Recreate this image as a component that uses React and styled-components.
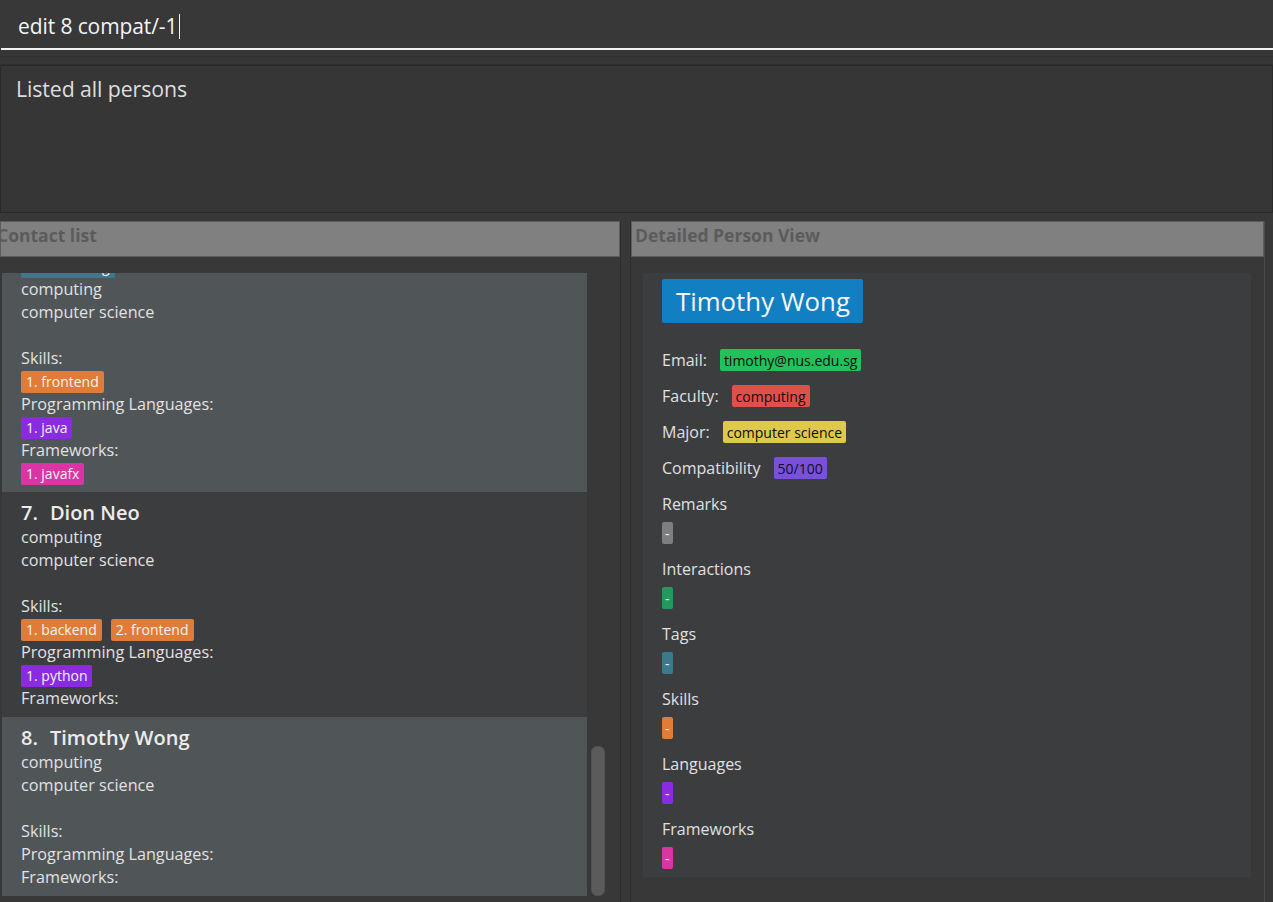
import React from "react";
import styled, { createGlobalStyle } from "styled-components";

const GlobalStyle = createGlobalStyle`
  html, body {
    margin: 0;
    padding: 0;
    background: #383838;
    font-family: "Open Sans", "Noto Sans", sans-serif;
    overflow: hidden;
  }
`;

const Root = styled.div`
  width: 1273px;
  height: 902px;
  display: flex;
  flex-direction: column;
  background: #383838;
  overflow: hidden;
`;

const CommandBar = styled.div`
  height: 50px;
  flex-shrink: 0;
  box-sizing: border-box;
  display: flex;
  align-items: center;
  padding: 4px 0 0 17px;
  border-bottom: 2px solid #f2f2f2;
  margin-left: 1px;
`;

const CommandText = styled.span`
  font-size: 21px;
  color: #f4f4f4;
  letter-spacing: -0.1px;
`;

const Caret = styled.span`
  display: inline-block;
  width: 1px;
  height: 25px;
  background: #f4f4f4;
  margin-left: 2px;
`;

const Band = styled.div`
  height: 15px;
  flex-shrink: 0;
  box-sizing: border-box;
  border-bottom: 1px solid #2e2e2e;
  background: #363636;
  &::after {
    content: "";
    display: block;
    height: 1px;
    margin-top: 6px;
    background: #303030;
  }
`;

const ResultBox = styled.div`
  height: 148px;
  flex-shrink: 0;
  box-sizing: border-box;
  border: 1px solid #2a2a2a;
  background: #363636;
  padding: 8px 15px;
  font-size: 21.3px;
  color: #dedede;
  letter-spacing: -0.1px;
`;

const Panes = styled.div`
  flex: 1;
  display: flex;
  margin-top: 8px;
  min-height: 0;
`;

const LeftPane = styled.div`
  width: 620px;
  display: flex;
  flex-direction: column;
  border-right: 1px solid #2c2c2c;
  min-height: 0;
`;

const RightPane = styled.div`
  width: 633px;
  margin-left: 9px;
  display: flex;
  flex-direction: column;
  border-right: 1px solid #4a4a4a;
  border-left: 1px solid #2f2f2f;
`;

const PaneHeader = styled.div`
  height: 36px;
  flex-shrink: 0;
  box-sizing: border-box;
  background: #808080;
  border: 1px solid #5c5c5c;
  padding: 0 0 0 ${p => p.$indent}px;
  line-height: 26px;
  font-size: 17.5px;
  font-weight: 700;
  color: #5b5b5b;
  white-space: nowrap;
  overflow: hidden;
`;

const ClippedTitle = styled.span`
  display: inline-block;
  margin-left: -4px;
`;

const ListBody = styled.div`
  flex: 1;
  display: flex;
  margin-top: 16px;
  padding-bottom: 6px;
  min-height: 0;
`;

const ListView = styled.div`
  width: 585px;
  margin-left: 2px;
  display: flex;
  flex-direction: column;
  justify-content: flex-end;
  overflow: hidden;
`;

const ScrollTrack = styled.div`
  flex: 1;
  display: flex;
  flex-direction: column;
  justify-content: flex-end;
  padding: 0 15px 0 4px;
`;

const ScrollThumb = styled.div`
  height: 148px;
  border-radius: 6px;
  background: #5b5b5b;
  border: 1px solid #525252;
`;

const Card = styled.div`
  flex-shrink: 0;
  background: ${p => (p.$alt ? "#505558" : "#3c3d3f")};
  padding: 8px 19px 7px;
  color: #e2e2e2;
`;

const Name = styled.div`
  height: 26px;
  line-height: 26px;
  font-size: 20px;
  font-weight: 600;
  color: #ececec;
`;

const Gap = styled.span`
  display: inline-block;
  width: 12px;
`;

const Line = styled.div`
  height: 23px;
  line-height: 23px;
  font-size: 16.2px;
`;

const BadgeRow = styled.div`
  height: 23px;
  display: flex;
  align-items: center;
  gap: 9px;
`;

const Badge = styled.span`
  display: inline-flex;
  align-items: center;
  height: 22px;
  padding: 0 ${p => p.$pad ?? 5}px;
  border-radius: 2px;
  background: ${p => p.$bg};
  color: ${p => p.$fg || "#f2f2f2"};
  font-size: 14px;
  white-space: nowrap;
`;

const DetailBody = styled.div`
  flex: 1;
  padding: 16px 13px 0 12px;
`;

const DetailCard = styled.div`
  background: #3c3d3f;
  padding: 6px 19px 8px;
  display: flex;
  flex-direction: column;
  align-items: flex-start;
  color: #e0e0e0;
`;

const NameBadge = styled.div`
  height: 44px;
  display: flex;
  align-items: center;
  padding: 0 13px 0 14px;
  background: #137fc3;
  border-radius: 2px;
  font-size: 25.8px;
  color: #f7f7f7;
  margin-bottom: 19px;
`;

const InfoRow = styled.div`
  height: 36px;
  display: flex;
  align-items: center;
  gap: 13px;
  font-size: 16px;
`;

const Sections = styled.div`
  display: flex;
  flex-direction: column;
  align-items: flex-start;
  gap: 13px;
  margin-top: 6px;
`;

const Section = styled.div`
  display: flex;
  flex-direction: column;
  align-items: flex-start;
  gap: 6px;
`;

const SectionLabel = styled.div`
  height: 24px;
  line-height: 24px;
  font-size: 16px;
`;

const COLORS = {
  tag: "#3b7a8d",
  skill: "#e07c37",
  lang: "#8a2be2",
  frame: "#db35a5",
};

const people = [
  {
    id: 6,
    name: "Alex Tan",
    tags: ["1. mentoring"],
    skills: ["1. frontend"],
    langs: ["1. java"],
    frames: ["1. javafx"],
    alt: true,
  },
  {
    id: 7,
    name: "Dion Neo",
    tags: [],
    skills: ["1. backend", "2. frontend"],
    langs: ["1. python"],
    frames: [],
  },
  {
    id: 8,
    name: "Timothy Wong",
    tags: [],
    skills: [],
    langs: [],
    frames: [],
    alt: true,
  },
];

function Chips({ items, color }) {
  if (!items.length) return null;
  return (
    <BadgeRow>
      {items.map(i => (
        <Badge key={i} $bg={color}>
          {i}
        </Badge>
      ))}
    </BadgeRow>
  );
}

function PersonCard({ p }) {
  return (
    <Card $alt={p.alt}>
      <Name>
        {p.id}.<Gap />{p.name}
      </Name>
      <Chips items={p.tags} color={COLORS.tag} />
      <Line>computing</Line>
      <Line>computer science</Line>
      <Line />
      <Line>Skills:</Line>
      <Chips items={p.skills} color={COLORS.skill} />
      <Line>Programming Languages:</Line>
      <Chips items={p.langs} color={COLORS.lang} />
      <Line>Frameworks:</Line>
      <Chips items={p.frames} color={COLORS.frame} />
    </Card>
  );
}

const sections = [
  { label: "Remarks", color: "#7f7f7f" },
  { label: "Interactions", color: "#23995e" },
  { label: "Tags", color: COLORS.tag },
  { label: "Skills", color: COLORS.skill },
  { label: "Languages", color: COLORS.lang },
  { label: "Frameworks", color: COLORS.frame },
];

export default function App() {
  return (
    <>
      <GlobalStyle />
      <Root>
        <CommandBar>
          <CommandText>edit 8 compat/-1</CommandText>
          <Caret />
        </CommandBar>
        <Band />
        <ResultBox>Listed all persons</ResultBox>
        <Panes>
          <LeftPane>
            <PaneHeader $indent={0}>
              <ClippedTitle>Contact list</ClippedTitle>
            </PaneHeader>
            <ListBody>
              <ListView>
                {people.map(p => (
                  <PersonCard key={p.id} p={p} />
                ))}
              </ListView>
              <ScrollTrack>
                <ScrollThumb />
              </ScrollTrack>
            </ListBody>
          </LeftPane>
          <RightPane>
            <PaneHeader $indent={3}>Detailed Person View</PaneHeader>
            <DetailBody>
              <DetailCard>
                <NameBadge>Timothy Wong</NameBadge>
                <InfoRow>
                  Email:<Badge $bg="#22c15b" $fg="#0d0d0d" $pad={4}>timothy@nus.edu.sg</Badge>
                </InfoRow>
                <InfoRow>
                  Faculty:<Badge $bg="#e0504b" $fg="#0d0d0d" $pad={4}>computing</Badge>
                </InfoRow>
                <InfoRow>
                  Major:<Badge $bg="#dfc94a" $fg="#0d0d0d" $pad={4}>computer science</Badge>
                </InfoRow>
                <InfoRow>
                  Compatibility<Badge $bg="#7a50d6" $fg="#0d0d2a" $pad={4}>50/100</Badge>
                </InfoRow>
                <Sections>
                  {sections.map(s => (
                    <Section key={s.label}>
                      <SectionLabel>{s.label}</SectionLabel>
                      <Badge $bg={s.color} $pad={3}>-</Badge>
                    </Section>
                  ))}
                </Sections>
              </DetailCard>
            </DetailBody>
          </RightPane>
        </Panes>
      </Root>
    </>
  );
}
